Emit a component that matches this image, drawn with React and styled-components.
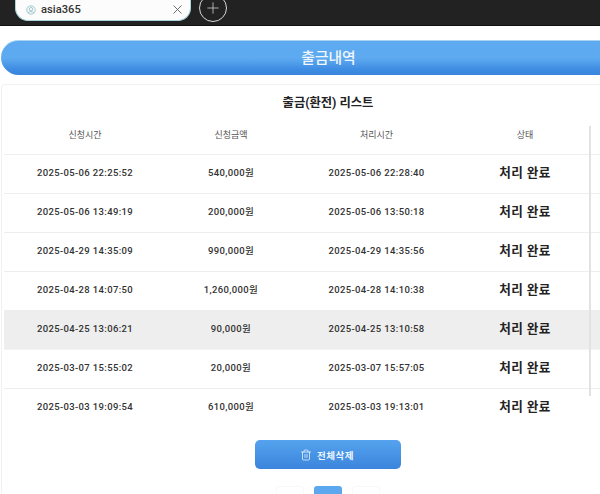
import React from 'react';
import styled, { createGlobalStyle } from 'styled-components';
import { X, Plus, Trash2 } from 'lucide-react';

const GlobalStyle = createGlobalStyle`
  html, body {
    margin: 0;
    padding: 0;
    background: #fff;
    overflow: hidden;
    height: 494px;
    font-family: Roboto, "Noto Sans CJK KR", sans-serif;
  }
`;

const Page = styled.div`
  width: 600px;
  height: 494px;
  overflow: hidden;
`;

const TopBar = styled.div`
  height: 26px;
  background: #222222;
  border-bottom: 1px solid #111;
  box-sizing: border-box;
  display: flex;
  align-items: flex-end;
  padding-left: 15px;
  gap: 8px;
`;

const Tab = styled.div`
  width: 176px;
  height: 27px;
  margin-bottom: 4px;
  box-sizing: border-box;
  background: #fbfcfb;
  border: 1px solid #a5d4da;
  border-top: none;
  border-radius: 0 0 13px 13px;
  display: flex;
  align-items: center;
  padding: 5px 5px 0 10px;
  color: #333;
  font-size: 11.2px;
  font-weight: 500;
`;

const TabName = styled.span`
  flex: 1;
  margin-left: 5px;
`;

const AddTab = styled.div`
  width: 28px;
  height: 28px;
  margin-bottom: 3px;
  box-sizing: border-box;
  border: 1px solid #d8d8d8;
  border-radius: 50%;
  color: #d8d8d8;
  display: flex;
  align-items: center;
  justify-content: center;
`;

const HeaderBar = styled.div`
  margin: 14px 0 0 1px;
  height: 35px;
  border-radius: 18px 0 0 18px;
  background: linear-gradient(180deg, #5eaaf0 0%, #5eaaf0 50%, #3d8be2 85%, #3a85dc 100%);
  border-top: 1px solid #a9d3f5;
  box-sizing: border-box;
  color: #f1f7fd;
  font-size: 14.8px;
  font-weight: 500;
  display: flex;
  align-items: center;
  justify-content: center;
  padding: 0 0 4px 56px;
`;

const Card = styled.div`
  margin: 9px 0 0 1px;
  border-top: 1px solid #f1f1f1;
  border-left: 1px solid #f1f1f1;
  border-radius: 4px 0 0 0;
  padding: 0 0 0 2px;
  position: relative;
`;

const CardTitle = styled.div`
  text-align: center;
  color: #222;
  font-size: 12.3px;
  font-weight: 700;
  height: 41px;
  line-height: 36px;
  padding-left: 52px;
`;

const ScrollLine = styled.div`
  position: absolute;
  left: 587px;
  top: 41px;
  width: 2px;
  height: 270px;
  background: #e2e2e2;
`;

const Row = styled.div`
  display: grid;
  grid-template-columns: 162px 130px 161px 136px;
  align-items: center;
  height: ${props => props.$head ? '28px' : '38px'};
  border-bottom: 1px solid ${props => props.$highlight ? '#f4f4f4' : props.$last ? 'transparent' : '#eeeeee'};
  background: ${props => props.$highlight ? '#eeeeee' : 'transparent'};
  text-align: center;
`;

const HeadCell = styled.div`
  color: #555;
  font-size: 9px;
  padding-bottom: 12px;
`;

const Cell = styled.div`
  color: #333;
  font-size: 9.5px;
  font-weight: 500;
  line-height: 12px;
  letter-spacing: 0.35px;
  padding-bottom: 3px;
`;

const Status = styled.div`
  color: #222;
  font-size: 12.6px;
  font-weight: 700;
  line-height: 16px;
  letter-spacing: 0.4px;
  padding-bottom: 2px;
`;

const Actions = styled.div`
  display: flex;
  justify-content: center;
  padding: 12px 0 0 52px;
`;

const DeleteButton = styled.div`
  width: 146px;
  height: 29px;
  border-radius: 5px;
  background: linear-gradient(180deg, #55a3ee 0%, #3b84dc 100%);
  color: #eef6fd;
  font-size: 9.5px;
  font-weight: 700;
  letter-spacing: 0.5px;
  display: flex;
  align-items: center;
  justify-content: center;
  gap: 5px;
  padding-right: 2px;
  box-sizing: border-box;
`;

const Pager = styled.div`
  display: flex;
  justify-content: center;
  gap: 10px;
  margin: 17px 0 0 0;
  padding-left: 52px;
`;

const PageBox = styled.div`
  width: 28px;
  height: 28px;
  border-radius: 3px;
  background: ${props => props.$active ? '#5ba8ef' : '#fff'};
  border: ${props => props.$active ? 'none' : '1px solid #f8f8f8'};
  box-sizing: border-box;
`;

const rows = [
  ['2025-05-06 22:25:52', '540,000원', '2025-05-06 22:28:40'],
  ['2025-05-06 13:49:19', '200,000원', '2025-05-06 13:50:18'],
  ['2025-04-29 14:35:09', '990,000원', '2025-04-29 14:35:56'],
  ['2025-04-28 14:07:50', '1,260,000원', '2025-04-28 14:10:38'],
  ['2025-04-25 13:06:21', '90,000원', '2025-04-25 13:10:58'],
  ['2025-03-07 15:55:02', '20,000원', '2025-03-07 15:57:05'],
  ['2025-03-03 19:09:54', '610,000원', '2025-03-03 19:13:01'],
];

function TabIcon() {
  return (
    <svg width="10" height="10" viewBox="0 0 12 12" fill="none" stroke="#8fbcc4" strokeWidth="1">
      <circle cx="6" cy="6" r="5" />
      <circle cx="6" cy="5" r="2" />
      <path d="M2.5 9.5c1-2 6-2 7 0" />
    </svg>
  );
}

export default function App() {
  return (
    <Page>
      <GlobalStyle />
      <TopBar>
        <Tab>
          <TabIcon />
          <TabName>asia365</TabName>
          <X size={15} strokeWidth={1.5} color="#666" />
        </Tab>
        <AddTab><Plus size={18} strokeWidth={1} /></AddTab>
      </TopBar>
      <HeaderBar>출금내역</HeaderBar>
      <Card>
        <CardTitle>출금(환전) 리스트</CardTitle>
        <ScrollLine />
        <Row $head>
          <HeadCell>신청시간</HeadCell>
          <HeadCell>신청금액</HeadCell>
          <HeadCell>처리시간</HeadCell>
          <HeadCell>상태</HeadCell>
        </Row>
        {rows.map((row, i) => (
          <Row key={row[0]} $highlight={i === 4} $last={i === rows.length - 1}>
            <Cell>{row[0]}</Cell>
            <Cell>{row[1]}</Cell>
            <Cell>{row[2]}</Cell>
            <Status>처리 완료</Status>
          </Row>
        ))}
        <Actions>
          <DeleteButton>
            <Trash2 size={12} strokeWidth={1.5} />
            전체삭제
          </DeleteButton>
        </Actions>
        <Pager>
          <PageBox />
          <PageBox $active />
          <PageBox />
        </Pager>
      </Card>
    </Page>
  );
}
